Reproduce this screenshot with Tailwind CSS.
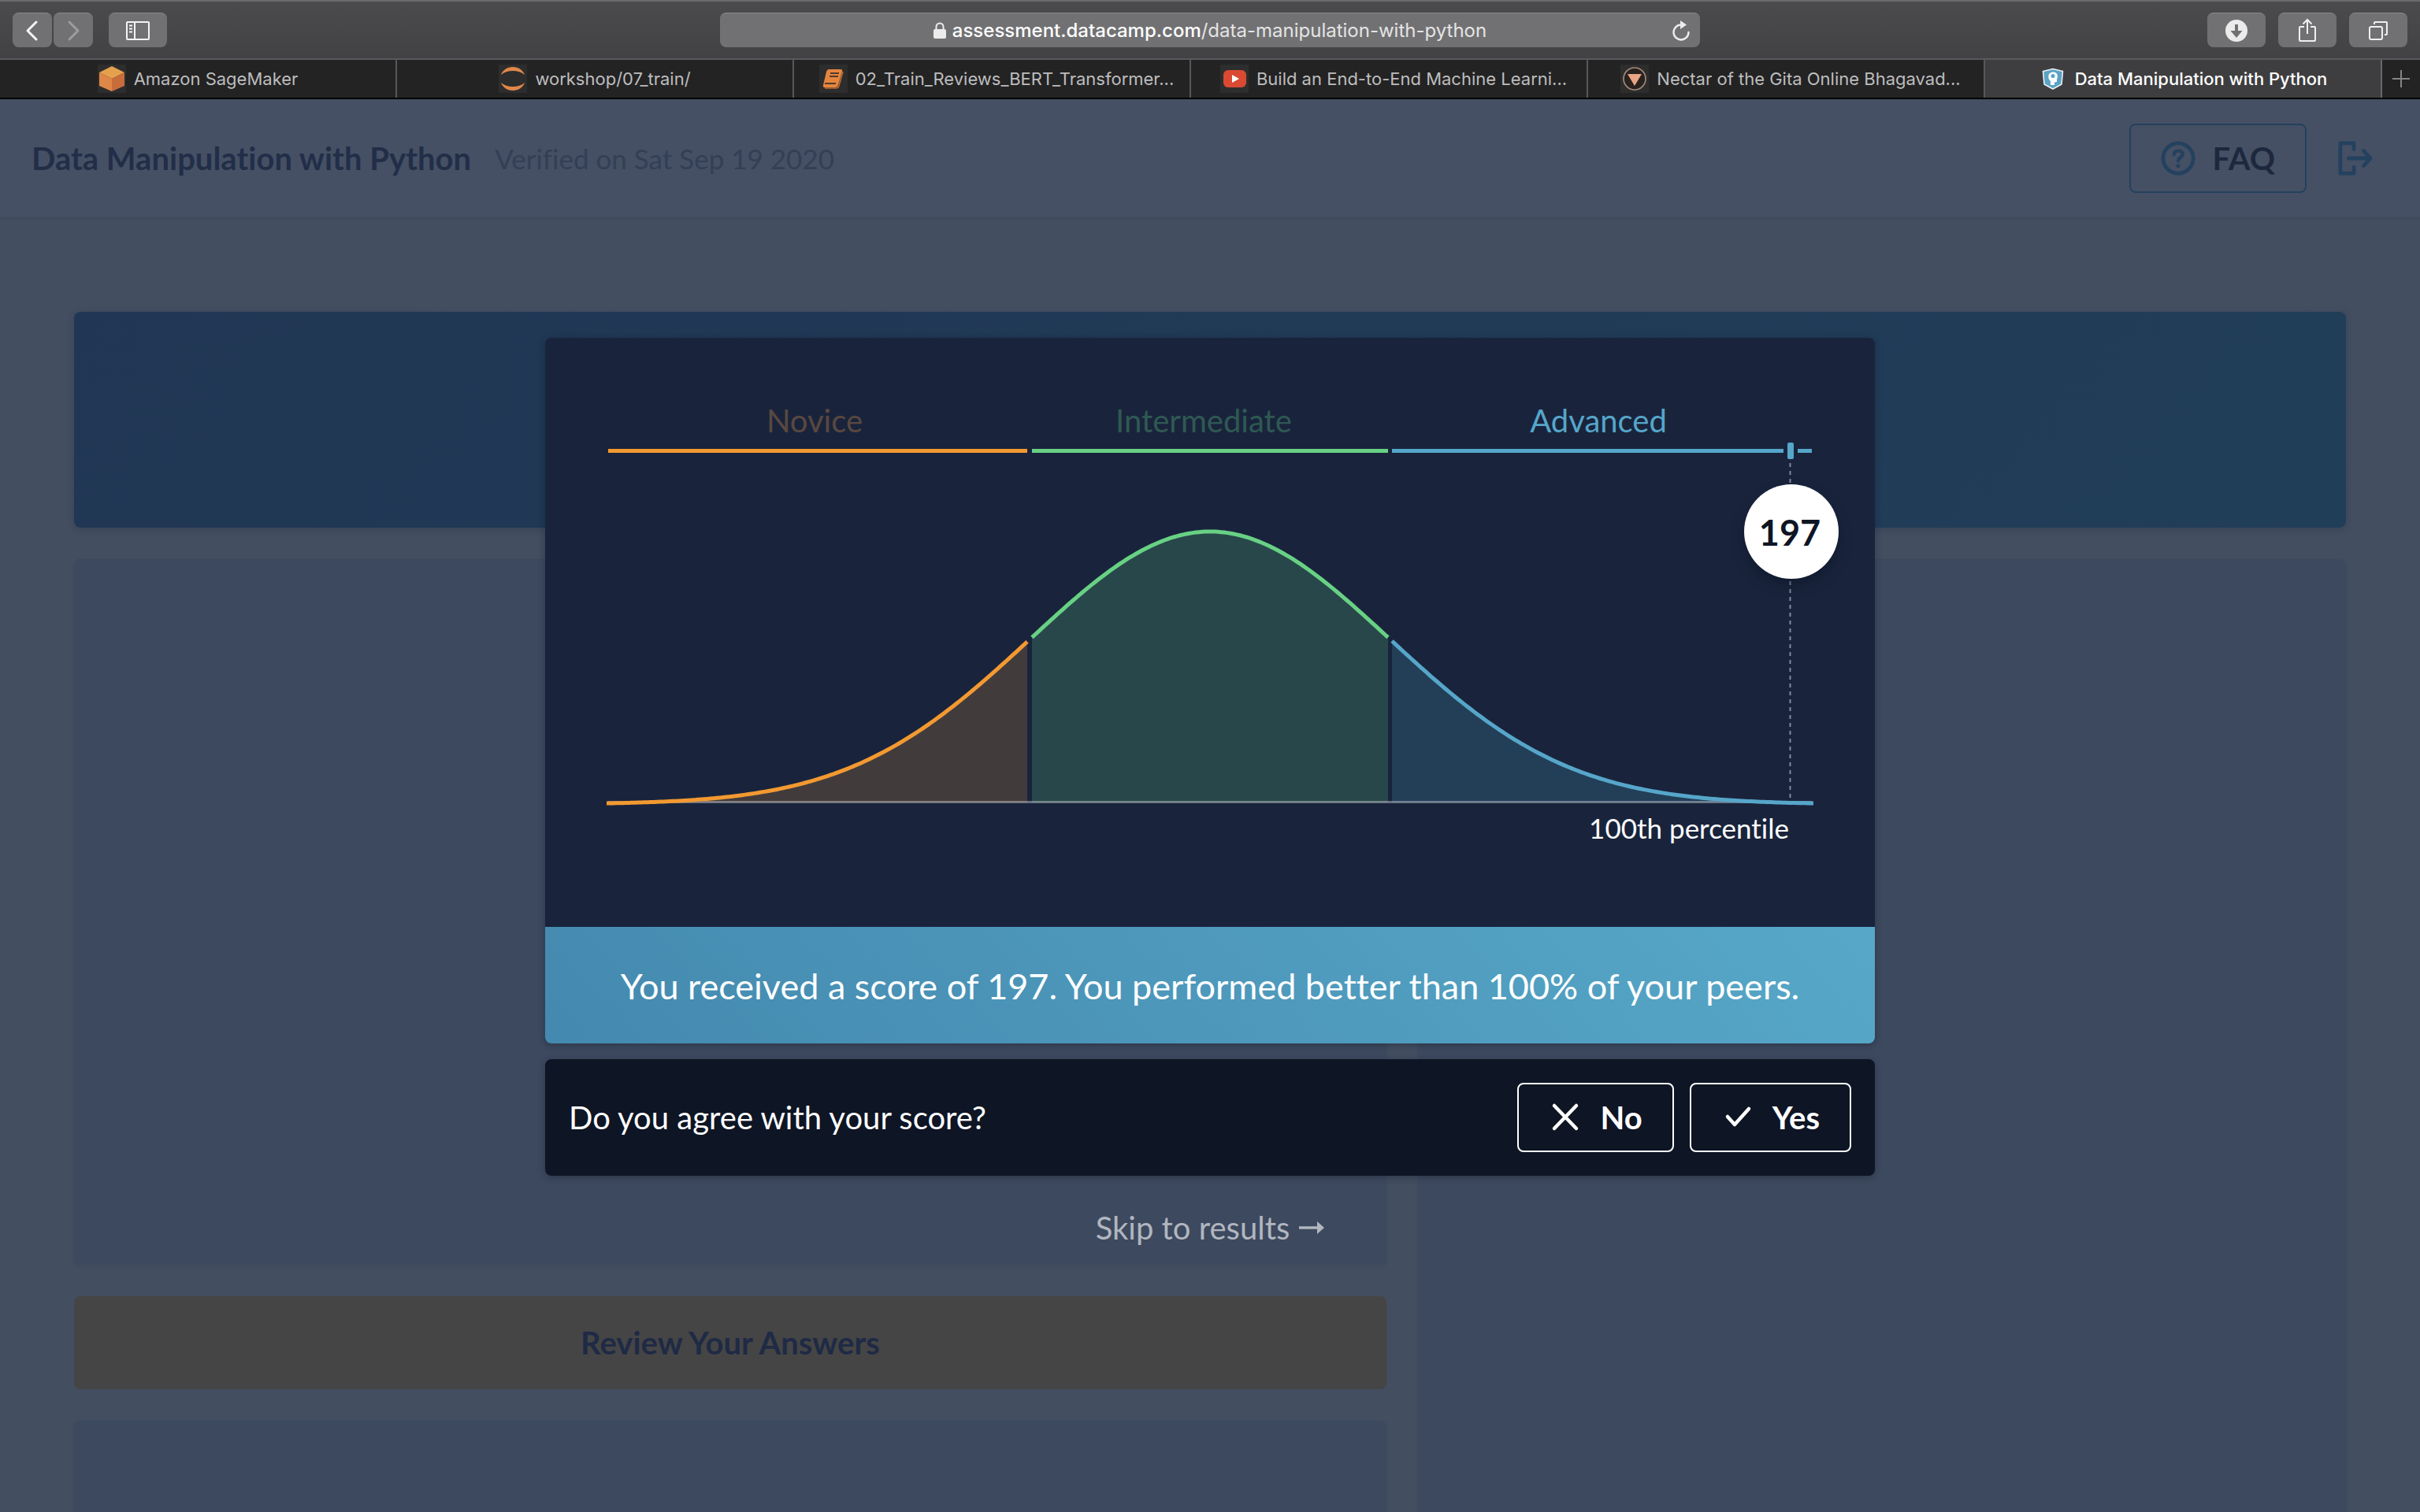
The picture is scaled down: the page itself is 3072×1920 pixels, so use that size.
<!DOCTYPE html>
<html lang="en">
<head>
<meta charset="utf-8">
<title>Data Manipulation with Python</title>
<script src="https://cdn.jsdelivr.net/npm/@tailwindcss/browser@4"></script>
</head>
<body class="flex h-screen flex-col overflow-hidden bg-[#434e61] font-['Lato',sans-serif] antialiased [font-variant-ligatures:none]">

<!-- Browser toolbar -->
<div class="flex h-[76px] shrink-0 items-center justify-between border-t-2 border-b-2 border-t-[#6b6b6d] border-b-[#59595b] bg-linear-to-b from-[#4b4b4d] to-[#424244] px-4 font-['Inter',sans-serif]">
  <div class="flex w-[400px] items-center">
    <button aria-label="Back" class="flex h-11 w-[50px] items-center justify-center rounded-lg border-t border-[#8a8a8c] bg-[#717173]">
      <svg class="h-7 w-5" viewBox="0 0 20 28" fill="none" stroke="#f4f4f4" stroke-width="3" stroke-linecap="round" stroke-linejoin="round"><path d="M15 3 4 14l11 11"/></svg>
    </button>
    <button aria-label="Forward" class="ml-[2px] flex h-11 w-[50px] items-center justify-center rounded-lg border-t border-[#8a8a8c] bg-[#717173]">
      <svg class="h-7 w-5" viewBox="0 0 20 28" fill="none" stroke="#9c9c9e" stroke-width="3" stroke-linecap="round" stroke-linejoin="round"><path d="m5 3 11 11L5 25"/></svg>
    </button>
    <button aria-label="Sidebar" class="ml-5 flex h-11 w-[74px] items-center justify-center rounded-lg border-t border-[#8a8a8c] bg-[#717173]">
      <svg class="h-6 w-[30px]" viewBox="0 0 30 24" fill="none" stroke="#f4f4f4" stroke-width="2"><rect x="1" y="1" width="28" height="22" rx="1"/><path d="M11 1v22M4 5.500h4M4 9.500h4M4 13.500h4"/></svg>
    </button>
  </div>
  <div class="relative flex h-11 w-[1244px] items-center justify-center rounded-lg border-t border-[#8a8a8c] bg-[#717173] text-[24px] leading-8">
    <svg class="mr-2 h-[22px] w-4" viewBox="0 0 16 22" fill="none"><rect x="0" y="9" width="16" height="12" rx="2" fill="#ececec"/><path d="M3.500 10V6a4.500 4.500 0 0 1 9 0v4" stroke="#ececec" stroke-width="2"/></svg>
    <span class="text-[#e4e4e4]"><span class="font-medium text-white">assessment.datacamp.com</span>/data-manipulation-with-python</span>
    <button aria-label="Reload" class="absolute right-3">
      <svg class="h-7 w-6" viewBox="0 0 24 28" fill="none"><path d="M12 6.500A9.500 9.500 0 1 0 21.500 16" stroke="#ececec" stroke-width="2.400" stroke-linecap="round"/><path d="M11 1v11l8-5.500z" fill="#ececec"/></svg>
    </button>
  </div>
  <div class="flex w-[400px] items-center justify-end gap-4">
    <button aria-label="Downloads" class="flex h-11 w-[74px] items-center justify-center rounded-lg border-t border-[#8a8a8c] bg-[#717173]">
      <svg class="size-7" viewBox="0 0 28 28"><circle cx="14" cy="14" r="14" fill="#ebebeb"/><path d="M12 6h4v8h5.500L14 23l-7.500-9H12z" fill="#717173"/></svg>
    </button>
    <button aria-label="Share" class="flex h-11 w-[74px] items-center justify-center rounded-lg border-t border-[#8a8a8c] bg-[#717173]">
      <svg class="h-[32px] w-6" viewBox="0 0 24 32" fill="none" stroke="#f0f0f0" stroke-width="2"><path d="M8 11H3q-1 0-1 1v16q0 1 1 1h18q1 0 1-1V12q0-1-1-1h-5M12 20V2M6.500 7.500 12 2l5.500 5.500"/></svg>
    </button>
    <button aria-label="Tab overview" class="flex h-11 w-[74px] items-center justify-center rounded-lg border-t border-[#8a8a8c] bg-[#717173]">
      <svg class="size-[26px]" viewBox="0 0 26 26" fill="none" stroke="#f0f0f0" stroke-width="2"><rect x="2" y="8" width="16" height="16" rx="2"/><path d="M8 5V3q0-1 1-1h14q1 0 1 1v14q0 1-1 1h-2"/></svg>
    </button>
  </div>
</div>

<!-- Tab strip -->
<nav class="grid h-[50px] shrink-0 grid-cols-[repeat(6,1fr)_48px] border-b-2 border-black bg-[#232324] font-['Inter',sans-serif] text-[22px] leading-7 text-[#bdbdbd]">
  <a href="#" class="flex items-center justify-center gap-[10px] border-r-2 border-[#58585a] whitespace-nowrap">
    <svg class="size-9 bg-[#2d2d2d]" viewBox="0 0 36 36"><path d="m18 2 16 8-16 8-16-8z" fill="#e5a04e"/><path d="m2 10 16 8v16L2 27z" fill="#de8748"/><path d="m34 10-16 8v16l16-7z" fill="#c96c3c"/></svg>
    <span>Amazon SageMaker</span>
  </a>
  <a href="#" class="flex items-center justify-center gap-[10px] border-r-2 border-[#58585a] whitespace-nowrap">
    <svg class="size-9 bg-[#2d2d2d]" viewBox="0 0 36 36" fill="#e0874a"><path d="M3 13C5 7 11 3 18 3s13 4 15 10C29 9.500 24 8 18 8S7 9.500 3 13zM3 23c2 6 8 10 15 10s13-4 15-10c-4 3.500-9 5-15 5S7 26.500 3 23z"/></svg>
    <span>workshop/07_train/</span>
  </a>
  <a href="#" class="flex items-center justify-center gap-[10px] border-r-2 border-[#58585a] pl-3 whitespace-nowrap">
    <svg class="size-9 bg-[#2d2d2d]" viewBox="0 0 36 36"><path d="M12 6h15q3 0 2 3l-5 17q-1 3-4 3H7q-3 0-2-3l4-17q1-3 3-3z" fill="#e5863f"/><path d="M14 11h11M13 15h11M7 24h14" stroke="#232324" stroke-width="1.600"/><path d="M30 9l-5 18q-1 3-4 3H7" fill="none" stroke="#b86a34" stroke-width="1.600"/></svg>
    <span>02_Train_Reviews_BERT_Transformer...</span>
  </a>
  <a href="#" class="flex items-center justify-center gap-[10px] border-r-2 border-[#58585a] pl-3 whitespace-nowrap">
    <svg class="size-9 bg-[#2d2d2d]" viewBox="0 0 36 36"><rect x="4" y="7" width="29" height="22" rx="6" fill="#da4a33"/><path d="m15 13 9 5-9 5z" fill="#fff"/></svg>
    <span>Build an End-to-End Machine Learni...</span>
  </a>
  <a href="#" class="flex items-center justify-center gap-[10px] border-r-2 border-[#58585a] pl-3 whitespace-nowrap">
    <svg class="size-9 bg-[#2d2d2d]" viewBox="0 0 36 36"><circle cx="18" cy="18" r="14" fill="#29221f" stroke="#a58d7c" stroke-width="1.600"/><path d="M9 12h18l-9 15z" fill="#e9a584"/></svg>
    <span>Nectar of the Gita Online Bhagavad...</span>
  </a>
  <a href="#" aria-current="page" class="flex items-center justify-center gap-[10px] border-r-2 border-[#68686a] bg-[#3e3e40] whitespace-nowrap font-medium text-white">
    <svg class="size-9" viewBox="0 0 36 36"><path d="M18 5.500 30.500 8.500 29 25l-11 6-11-6L5.500 8.500z" fill="#5ba3c6" stroke="#e9f1f5" stroke-width="1.600" stroke-linejoin="round"/><path d="M15 26v-5c-4-3-4-11 3-11.500 6 0 7 5 5 9v3.500l-3 .5v3.500z" fill="#fff"/><circle cx="18" cy="14.500" r="2.500" fill="#5ba3c6"/></svg>
    <span>Data Manipulation with Python</span>
  </a>
  <button aria-label="New tab" class="flex items-center justify-center">
    <svg class="size-[22px]" viewBox="0 0 22 22" stroke="#858587" stroke-width="2"><path d="M11 0v22M0 11h22"/></svg>
  </button>
</nav>

<div class="relative flex min-h-0 flex-1 flex-col">
  <!-- Page header -->
  <header class="flex h-[152px] shrink-0 items-center justify-between border-b-2 border-[#3f4a5e] bg-[#455064] px-10">
    <div class="flex items-center gap-[30px]">
      <h1 class="text-[40px] leading-[60px] font-bold text-[#222e48]">Data Manipulation with Python</h1>
      <p class="text-[35px] leading-[60px] text-[#333f57]">Verified on Sat Sep 19 2020</p>
    </div>
    <div class="flex items-center gap-10 pr-5">
      <button class="flex h-[88px] items-center gap-[22px] rounded-lg border-2 border-[#24415f] px-[38px] text-[40px] leading-[60px] font-bold text-[#1d283e]">
        <svg class="size-11" viewBox="0 0 46 46" fill="none" stroke="#24415f" stroke-width="5"><circle cx="23" cy="23" r="20"/><path d="M17.500 18c0-7 11.500-6.500 11.500-.5 0 4-5.500 4-6 9" stroke-width="4.500" stroke-linecap="round"/><circle cx="23" cy="33" r="2.700" fill="#24415f" stroke="none"/></svg>
        FAQ
      </button>
      <a href="#" aria-label="Sign out">
        <svg class="size-11" viewBox="0 0 46 46" fill="none" stroke="#24415f" stroke-width="5" stroke-linecap="round" stroke-linejoin="round"><path d="M21 11V3H3v40h18v-8"/><path d="M14 23h29M34 13l9 10-9 10"/></svg>
      </a>
    </div>
  </header>

  <!-- Page content -->
  <main class="flex min-h-0 flex-1 flex-col gap-10 px-[94px] pt-[118px]">
    <div class="h-[274px] shrink-0 rounded-lg bg-linear-135 from-[#203654] to-[#213e59] shadow-[0_2px_8px_rgba(25,36,60,0.25)]"></div>
    <div class="grid min-h-0 flex-1 grid-cols-[1666fr_1178fr] gap-10">
      <div class="flex min-h-0 flex-col gap-10">
        <section class="h-[896px] shrink-0 rounded-lg bg-[#3d495f] shadow-[0_2px_4px_rgba(25,36,60,0.1)]"></section>
        <button class="h-[118px] shrink-0 rounded-lg bg-[#454545] text-[40px] leading-[60px] font-bold text-[#1f2a45]">Review Your Answers</button>
        <section class="flex-1 rounded-t-lg bg-[#3d495f] shadow-[0_2px_4px_rgba(25,36,60,0.1)]"></section>
      </div>
      <section class="rounded-t-lg bg-[#3d495f] shadow-[0_2px_4px_rgba(25,36,60,0.1)]"></section>
    </div>
  </main>

  <!-- Score dialog -->
  <div role="dialog" aria-label="Your score" class="absolute inset-0 flex justify-center pt-[303px]">
    <div class="flex w-full max-w-[1688px] flex-col gap-5">
      <div class="overflow-hidden rounded-lg bg-[#19243c] shadow-[0_2px_10px_rgba(15,21,35,0.35)]">
        <svg id="chart" class="block w-full" viewBox="0 0 1688 748" font-family="Lato, sans-serif">
          <g font-size="40" text-anchor="middle">
            <text x="342" y="120" fill="#5a4840">Novice</text>
            <text x="836" y="120" fill="#2f5953">Intermediate</text>
            <text x="1337" y="120" fill="#56a6ca">Advanced</text>
          </g>
          <g stroke-width="5">
            <path d="M80 143.500H612" stroke="#f39931"/>
            <path d="M618 143.500h452" stroke="#68d184"/>
            <path d="M1075 143.500h497M1590 143.500h18" stroke="#56a6ca"/>
          </g>
          <g id="areas"></g>
          <path d="M80 589.500H1608" stroke="#fff" stroke-opacity=".35" stroke-width="3"/>
          <g id="curves" fill="none" stroke-width="5"></g>
          <path d="M1580.500 159V590" stroke="#8088a0" stroke-width="2" stroke-dasharray="5 5"/>
          <rect x="1577" y="133" width="8" height="21" rx="2" fill="#56a6ca"/>
          <text x="1579" y="636" text-anchor="end" font-size="35" fill="#fff">100th percentile</text>
          <circle cx="1582" cy="246" r="60" fill="#fff" class="drop-shadow-[0_8px_8px_rgba(5,12,28,0.4)]"/>
          <text x="1580" y="264" text-anchor="middle" font-size="45" font-weight="700" fill="#0e1524">197</text>
        </svg>
        <p class="bg-linear-45 from-[#4489af] to-[#57a8c8] pt-[45px] pb-[43px] text-center text-[45px] leading-[60px] text-white">You received a score of 197. You performed better than 100% of your peers.</p>
      </div>
      <div class="flex h-[148px] items-center justify-between rounded-lg bg-[#0e1524] px-[30px] text-[40px] leading-[60px] text-white shadow-[0_2px_10px_rgba(15,21,35,0.35)]">
        <p>Do you agree with your score?</p>
        <div class="flex gap-5">
          <button class="flex h-[88px] items-center gap-[23px] rounded-lg border-2 border-white px-[38px] font-bold">
            <svg class="size-[42px]" viewBox="0 0 42 42" fill="none" stroke="#fff" stroke-width="4.500" stroke-linecap="round"><path d="m7 6 28 29M35 6 7 35"/></svg>No
          </button>
          <button class="flex h-[88px] items-center gap-[23px] rounded-lg border-2 border-white px-[38px] font-bold">
            <svg class="size-[42px]" viewBox="0 0 42 42" fill="none" stroke="#fff" stroke-width="4.500" stroke-linecap="round" stroke-linejoin="round"><path d="m8 20 9 10L35 10"/></svg>Yes
          </button>
        </div>
      </div>
      <a href="#" class="mt-4 flex items-center justify-center gap-3 text-[40px] leading-[60px] text-[#b1b6bf]">Skip to results
        <svg class="h-[18px] w-8" viewBox="0 0 32 18"><path d="M0 9h26" stroke="#b1b6bf" stroke-width="3.500"/><path d="m23 1 9 8-9 8z" fill="#b1b6bf"/></svg>
      </a>
    </div>
  </div>
</div>

<script>
  // Normal distribution split into the three skill levels
  const MEAN = 844, SIGMA = 228, BASE = 591;
  const height = x => BASE - (346.3 * Math.exp(-((x - MEAN) ** 2) / (2 * SIGMA ** 2)) - 1.3);
  const levels = [
    { from: 78, to: 612, line: '#f39931', area: '#423b3c' },
    { from: 618, to: 1070, line: '#68d184', area: '#28474b' },
    { from: 1075, to: 1610, line: '#56a6ca', area: '#233f58' },
  ];
  const add = (id, attrs) => {
    const path = document.createElementNS('http://www.w3.org/2000/svg', 'path');
    for (const key in attrs) path.setAttribute(key, attrs[key]);
    document.getElementById(id).append(path);
  };
  for (const level of levels) {
    const points = [];
    for (let x = level.from; x < level.to; x += 4) points.push(x + ' ' + height(x).toFixed(2));
    points.push(level.to + ' ' + height(level.to).toFixed(2));
    const line = 'M' + points.join('L');
    add('areas', { d: line + 'V590H' + level.from + 'Z', fill: level.area });
    add('curves', { d: line, stroke: level.line });
  }
</script>
</body>
</html>
